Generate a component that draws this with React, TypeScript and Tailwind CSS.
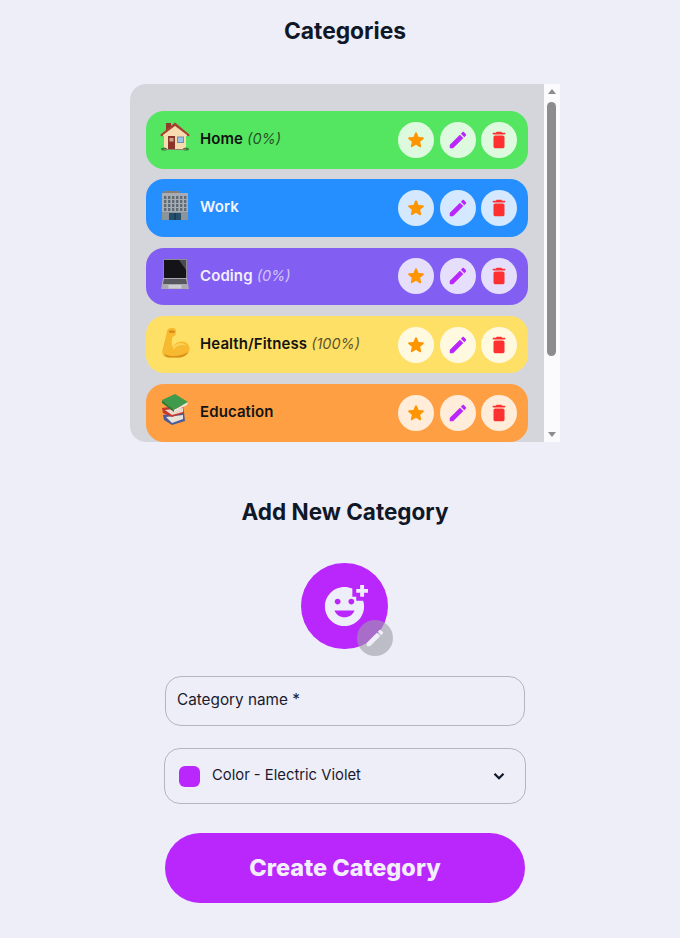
interface Category {
  icon: React.ReactNode;
  name: string;
  progress?: string;
  bg: string;
  text: string;
}

function HouseEmoji() {
  return (
    <svg viewBox="0 0 40 40" className="mb-[4px] size-[40px] shrink-0">
      <rect x="11" y="5" width="5" height="7" fill="#8f3a2a" />
      <rect x="9" y="13" width="22" height="18" fill="#f6dcae" />
      <path d="M5 17 L20 4.5 L35 17 L33 18.5 L20 8.5 L7 18.5 Z" fill="#a8402f" />
      <path d="M8 17 L20 8 L32 17 L32 18 L8 18 Z" fill="#f6dcae" />
      <rect x="13" y="18" width="7" height="13" fill="#8a3527" />
      <rect x="14.5" y="20" width="4" height="3.5" fill="#c9a58c" />
      <rect x="22" y="18.5" width="7" height="6.5" fill="#6f8fb0" />
      <rect x="23" y="19.5" width="5" height="4.5" fill="#9cc3e6" />
      <ellipse cx="9" cy="31" rx="3" ry="1.5" fill="#3f7f3a" />
      <ellipse cx="31" cy="31" rx="3" ry="1.5" fill="#3f7f3a" />
      <rect x="9" y="31" width="22" height="1" fill="#8d7f6a" />
    </svg>
  );
}

function BuildingEmoji() {
  const cols = [9, 13, 17, 21, 25, 29];
  const rows = [10, 14, 18, 22];
  return (
    <svg viewBox="0 0 40 40" className="mb-[4px] size-[40px] shrink-0">
      <rect x="9" y="5" width="16" height="3" fill="#8a7f78" />
      <rect x="7" y="7" width="26" height="27" fill="#a7adb3" />
      {rows.map((y) =>
        cols.map((x) => <rect key={`${x}-${y}`} x={x} y={y} width="2.4" height="3" fill="#5f6b76" />),
      )}
      <rect x="7" y="26" width="26" height="8" fill="#8d949b" />
      <rect x="14" y="27" width="12" height="7" fill="#24506e" />
      <rect x="19.5" y="27" width="1" height="7" fill="#0f2d42" />
    </svg>
  );
}

function LaptopEmoji() {
  return (
    <svg viewBox="0 0 40 40" className="mb-[4px] size-[40px] shrink-0">
      <rect x="8" y="5" width="24" height="20" rx="1" fill="#8b8b92" />
      <rect x="9" y="6" width="22" height="18" fill="#141418" />
      <path d="M24 6 L31 6 L31 16 Z" fill="#4a4a52" />
      <path d="M8 24 L32 24 L34 35 L6 35 Z" fill="#a9a9b1" />
      <path d="M9 25 L31 25 L32 30 L8 30 Z" fill="#57575f" />
      <rect x="13.5" y="31" width="13" height="3.5" fill="#cdcdd3" />
    </svg>
  );
}

function MuscleEmoji() {
  return (
    <svg viewBox="0 0 40 40" className="mb-[4px] size-[40px] shrink-0">
      <path
        d="M12 8 C13 3.5 21 3.5 21 8 L20.5 12 L17.5 14 C16.5 18 16.5 21 17.5 24 C22 17 31 17 34 23 C36.5 29 31 34.5 24 34.5 L14 34.5 C8.5 34.5 6.5 31 7.5 27 C9 21 11 14 12 8 Z"
        fill="#f6b92f"
      />
      <path d="M18 24 C22 19 28 19 32 23 C28 21 22 21.5 18 27 Z" fill="#fcd25a" />
      <path d="M9 31 C15 34 26 34 33 29 C31 33 27 34.5 24 34.5 L14 34.5 C12 34.5 10 33.5 9 31 Z" fill="#d98f1c" />
      <path d="M13.5 8 C15.5 7 18 7 20 8 L19.5 10 L14.5 10 Z" fill="#d98f1c" />
    </svg>
  );
}

function BooksEmoji() {
  return (
    <svg viewBox="0 0 40 40" className="mb-[4px] size-[40px] shrink-0">
      <path d="M8 24 L29 21 L30 30 L17 34 L9 29 Z" fill="#4d5c99" />
      <path d="M11 26 L28 24 L28 28 L17 32 Z" fill="#e8e4dc" />
      <path d="M7 17 L28 14 L29 22 L17 26 L8 22 Z" fill="#c23b31" />
      <path d="M10 19 L28 17 L28 21 L17 24 Z" fill="#ecd9cc" />
      <path d="M7 9 L20 3 L33 11 L19 19 Z" fill="#3f9a4b" />
      <path d="M7 9 L19 19 L19 21 L7 12 Z" fill="#2c7a39" />
      <path d="M19 19 L33 11 L32 14 L19 21 Z" fill="#e9e6da" />
    </svg>
  );
}

const categories: Category[] = [
  { icon: <HouseEmoji />, name: "Home", progress: "(0%)", bg: "bg-[#54e660]", text: "text-[#101010]" },
  { icon: <BuildingEmoji />, name: "Work", bg: "bg-[#268fff]", text: "text-[#f0f5ff]" },
  { icon: <LaptopEmoji />, name: "Coding", progress: "(0%)", bg: "bg-[#825ef2]", text: "text-[#f3efff]" },
  { icon: <MuscleEmoji />, name: "Health/Fitness", progress: "(100%)", bg: "bg-[#ffe066]", text: "text-[#141414]" },
  { icon: <BooksEmoji />, name: "Education", bg: "bg-[#ff9f43]", text: "text-[#141414]" },
];

function StarIcon() {
  return (
    <svg viewBox="0 0 24 24" className="size-[22px] fill-[#ff9500]">
      <path d="M12 17.27l4.15 2.51c.76.46 1.69-.22 1.49-1.08l-1.1-4.72 3.67-3.18c.67-.58.31-1.68-.57-1.75l-4.83-.41-1.89-4.46c-.34-.81-1.5-.81-1.84 0L9.19 8.63l-4.83.41c-.88.07-1.24 1.17-.57 1.75l3.67 3.18-1.1 4.72c-.2.86.73 1.54 1.49 1.08l4.15-2.5z" />
    </svg>
  );
}

function EditIcon({ className }: { className: string }) {
  return (
    <svg viewBox="0 0 24 24" className={className}>
      <path d="M3 17.46v3.04c0 .28.22.5.5.5h3.04c.13 0 .26-.05.35-.15L17.81 9.94l-3.75-3.75L3.15 17.1c-.1.1-.15.22-.15.36zM20.71 7.04c.39-.39.39-1.02 0-1.41l-2.34-2.34c-.39-.39-1.02-.39-1.41 0l-1.83 1.83 3.75 3.75 1.83-1.83z" />
    </svg>
  );
}

function TrashIcon() {
  return (
    <svg viewBox="0 0 24 24" className="size-[22px] fill-[#ff3030]">
      <path d="M6 19c0 1.1.9 2 2 2h8c1.1 0 2-.9 2-2V9c0-1.1-.9-2-2-2H8c-1.1 0-2 .9-2 2v10zM18 4h-2.5l-.71-.71c-.18-.18-.44-.29-.7-.29H9.91c-.26 0-.52.11-.7.29L8.5 4H6c-.55 0-1 .45-1 1s.45 1 1 1h12c.55 0 1-.45 1-1s-.45-1-1-1z" />
    </svg>
  );
}

function FaceIcon() {
  return (
    <svg viewBox="0 0 24 24" className="size-[47px] fill-[#eeeef8]">
      <path d="M18 9V7h-2V2.84C14.77 2.3 13.42 2 11.99 2 6.47 2 2 6.48 2 12s4.47 10 9.99 10C17.52 22 22 17.52 22 12c0-1.05-.17-2.05-.47-3H18zm-2.5-1c.83 0 1.5.67 1.5 1.5s-.67 1.5-1.5 1.5-1.5-.67-1.5-1.5.67-1.5 1.5-1.5zm-7 0c.83 0 1.5.67 1.5 1.5S9.33 11 8.5 11 7 10.33 7 9.5 7.67 8 8.5 8zm3.5 9.5c-2.33 0-4.31-1.46-5.11-3.5h10.22c-.8 2.04-2.78 3.5-5.11 3.5zM22 3h2v2h-2v2h-2V5h-2V3h2V1h2v2z" />
    </svg>
  );
}

function RoundButton({ children }: { children: React.ReactNode }) {
  return (
    <div className="flex size-9 items-center justify-center rounded-full bg-white/80">
      {children}
    </div>
  );
}

function CategoryRow({ item }: { item: Category }) {
  return (
    <div className={`flex h-[57.6px] shrink-0 items-center rounded-[18px] pl-[9px] pr-[11px] ${item.bg}`}>
      {item.icon}
      <span className={`mb-[1px] ml-[5px] flex-1 text-[15px] font-semibold tracking-[0.1px] ${item.text}`}>
        {item.name}
        {item.progress && <em className="ml-1 text-[14.5px] font-normal tracking-normal opacity-70">{item.progress}</em>}
      </span>
      <div className="flex gap-[5.4px]">
        <RoundButton><StarIcon /></RoundButton>
        <RoundButton><EditIcon className="size-[22px] fill-[#b927fc]" /></RoundButton>
        <RoundButton><TrashIcon /></RoundButton>
      </div>
    </div>
  );
}

export default function App() {
  return (
    <div className="flex h-[938px] flex-col items-center overflow-hidden bg-[#eeeef8] pl-[10px] font-['Inter','Liberation_Sans',sans-serif] text-[#101828]">
      <h1 className="mt-[16px] text-[22.8px] leading-[29px] font-bold">Categories</h1>

      <div className="mt-[39px] flex h-[358px] w-[430px] overflow-hidden">
        <div className="flex flex-1 flex-col gap-[10.7px] overflow-hidden rounded-l-[16px] bg-[#d5d6dc] pl-[16px] pr-[16px] pt-[27px]">
          {categories.map((item) => (
            <CategoryRow key={item.name} item={item} />
          ))}
        </div>
        <div className="relative w-[16px] bg-[#fbfbfe]">
          <div className="absolute left-[4px] top-[5px] size-0 border-x-[4px] border-b-[5px] border-x-transparent border-b-[#8c8c8c]" />
          <div className="absolute left-[3px] top-[18px] h-[254px] w-[9px] rounded-full bg-[#8c8c8c]" />
          <div className="absolute bottom-[5px] left-[4px] size-0 border-x-[4px] border-t-[5px] border-x-transparent border-t-[#8c8c8c]" />
        </div>
      </div>

      <h2 className="mt-[55px] text-[22.5px] leading-[29px] font-bold">Add New Category</h2>

      <div className="relative ml-[-1px] mt-[37px] flex h-[86px] w-[87px] items-center justify-center rounded-full bg-[#b927fc]">
        <FaceIcon />
        <div className="absolute left-[56px] top-[57px] flex size-9 items-center justify-center rounded-full bg-[#9c9ca6]/60">
          <EditIcon className="size-[22px] fill-[#eeeef8]" />
        </div>
      </div>

      <div className="mt-[27px] flex h-[50px] w-[360px] items-center rounded-[16px] border border-[#b5b5c2] px-[11px] pb-[1px] text-[15.3px] text-[#1a1a2e]">
        Category name *
      </div>

      <div className="mt-[22px] flex h-[56px] w-[362px] items-center rounded-[16px] border border-[#b5b5c2] pl-[14px] pr-[17px] text-[14.8px] text-[#1a1a2e]">
        <span className="size-[21px] rounded-[6px] bg-[#b927fc]" />
        <span className="mb-[1px] ml-[12px] flex-1">Color - Electric Violet</span>
        <svg viewBox="0 0 24 24" className="size-[18px] fill-none stroke-[#101828] stroke-[3]">
          <path d="M6 9l6 6 6-6" />
        </svg>
      </div>

      <button className="mt-[29px] h-[70px] w-[360px] rounded-full bg-[#b927fc] text-[23.5px] font-extrabold text-[#f3eefc]">
        Create Category
      </button>
    </div>
  );
}
